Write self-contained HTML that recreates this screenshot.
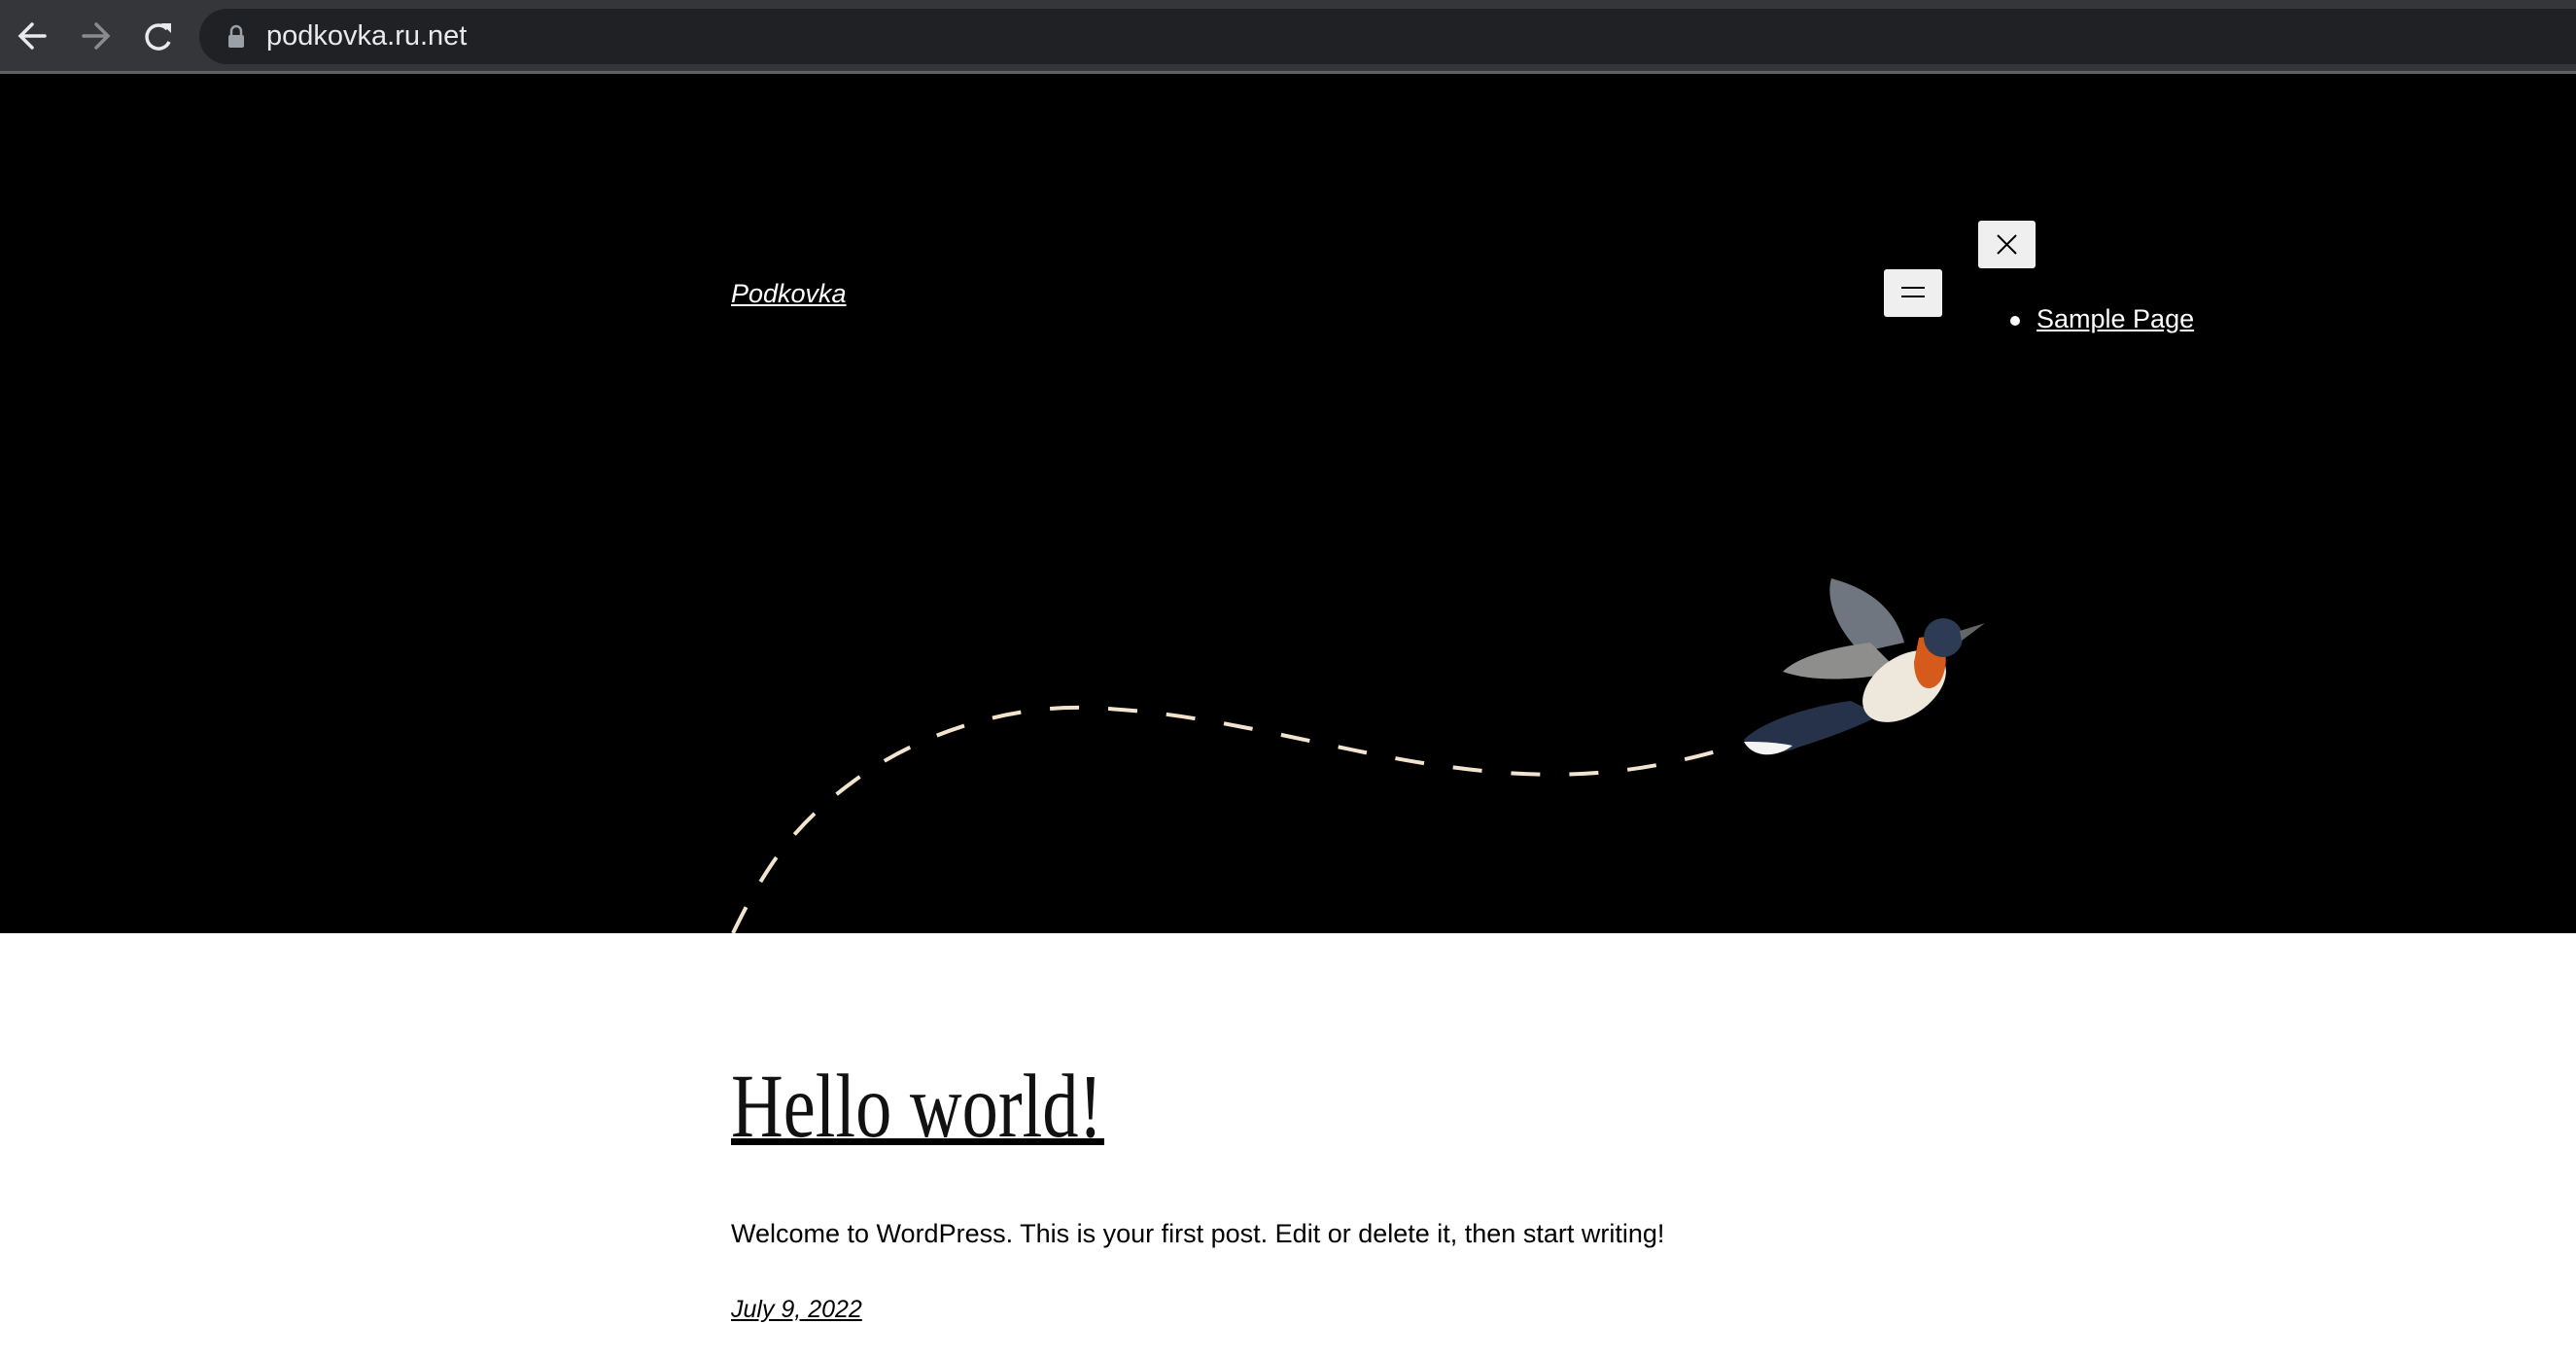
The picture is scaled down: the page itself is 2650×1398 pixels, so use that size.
<!DOCTYPE html>
<html><head><meta charset="utf-8"><style>
html,body{margin:0;padding:0;width:2650px;height:1398px;overflow:hidden;background:#fff;font-family:"Liberation Sans",sans-serif}
.bar{position:absolute;left:0;top:0;width:2650px;height:73px;background:#35363a;border-bottom:3px solid #5f6063}
.pill{position:absolute;left:205px;top:9px;width:2500px;height:57px;border-radius:29px;background:#202124}
.url{position:absolute;left:274px;top:21px;font-size:29px;color:#e8eaed}
.hero{position:absolute;left:0;top:76px;width:2650px;height:884px;background:#000}
.logo{position:absolute;left:752px;top:287px;font-size:27px;font-style:italic;color:#fff;text-decoration:underline}
.btn{position:absolute;background:#efefef;border-radius:3px}
.sp{position:absolute;left:2095px;top:313px;font-size:27px;color:#fff;text-decoration:underline}
.dot{position:absolute;left:2068px;top:325px;width:10px;height:10px;border-radius:50%;background:#fff}
.h1{position:absolute;left:752px;top:1092px;font-family:"Liberation Serif",serif;font-size:93px;line-height:1;color:#111;transform:scaleX(0.8);transform-origin:left top;white-space:nowrap}
.ul{position:absolute;left:752px;top:1171px;width:384px;height:7px;background:#000}
.p{position:absolute;left:752px;top:1254px;font-size:27px;color:#000;white-space:nowrap}
.d{position:absolute;left:752px;top:1333px;font-size:25px;font-style:italic;text-decoration:underline;color:#000}
</style></head><body>
<div class="bar">
<svg width="200" height="73" style="position:absolute;left:0;top:0">
<g stroke="#e8eaed" stroke-width="3.5" fill="none" stroke-linecap="round">
<path d="M46 37H22M33 25L21 37L33 49"/>
</g>
<g stroke="#8a8b8e" stroke-width="3.5" fill="none" stroke-linecap="round"><path d="M86 37H110M99 25L111 37L99 49"/></g>
<path d="M172 30A12 12 0 1 0 174 43" stroke="#e8eaed" stroke-width="3.5" fill="none"/>
<path d="M166 24L176 24L176 34Z" fill="#e8eaed"/>
</svg>
<div class="pill"></div>
<svg width="20" height="26" style="position:absolute;left:233px;top:25px"><path d="M5 11V7a5 5 0 0 1 10 0v4" stroke="#9aa0a6" stroke-width="2.5" fill="none"/><rect x="2" y="11" width="16" height="13" rx="2" fill="#9aa0a6"/></svg>
<div class="url">podkovka.ru.net</div>
</div>
<div class="hero">
<svg width="2650" height="884" style="position:absolute;left:0;top:0">
<path d="M754 884 C790 810 820 770 879 727 C940 682 1030 650 1115 652 C1250 655 1380 700 1500 714 C1620 730 1700 715 1769 696" stroke="#f3e4cf" stroke-width="4" fill="none" stroke-dasharray="30 30"/>
<g transform="translate(1944,625)">
<path d="M-30 -30 C-60 -60 -65 -90 -60 -106 C-20 -95 5 -75 15 -40Z" fill="#6f7680"/>
<path d="M-20 -40 C-60 -35 -95 -25 -110 -10 C-80 0 -40 0 10 -10Z" fill="#8e8f8c"/>
<path d="M-40 20 C-80 25 -130 40 -150 60 C-140 78 -110 75 -95 68 C-70 60 -40 50 -10 35Z" fill="#26324a"/>
<path d="M-150 62 C-140 80 -115 78 -100 66 C-120 62 -135 62 -150 62Z" fill="#f4f4f4"/>
<ellipse cx="15" cy="5" rx="48" ry="30" fill="#eee8dc" transform="rotate(-35 15 5)"/>
<path d="M30 -45 C55 -50 65 -25 52 0 C40 15 25 5 25 -20Z" fill="#d65a1c"/>
<circle cx="55" cy="-45" r="20" fill="#2d3b55"/>
<path d="M72 -52L98 -60L74 -42Z" fill="#666"/>
</g>
</svg>
</div>
<div class="logo">Podkovka</div>
<div class="btn" style="left:1938px;top:277px;width:60px;height:49px"><div style="position:absolute;left:18px;top:18px;width:24px;height:2px;background:#000"></div><div style="position:absolute;left:18px;top:27px;width:24px;height:2px;background:#000"></div></div>
<div class="btn" style="left:2035px;top:227px;width:59px;height:49px"><svg width="59" height="49"><path d="M20 15L39 34M39 15L20 34" stroke="#000" stroke-width="2"/></svg></div>
<div class="dot"></div>
<div class="sp">Sample Page</div>
<div class="h1">Hello world!</div>
<div class="ul"></div>
<div class="p">Welcome to WordPress. This is your first post. Edit or delete it, then start writing!</div>
<div class="d">July 9, 2022</div>
</body></html>
